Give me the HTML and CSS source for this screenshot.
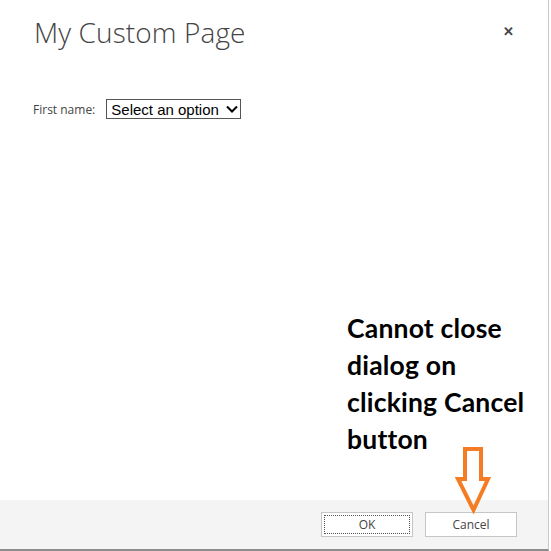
FILE: index.html
```html
<!DOCTYPE html>
<html>
<head>
<meta charset="utf-8">
<link rel="stylesheet" href="styles.css">
</head>
<body>
<div class="dialog">
  <div class="header">
    <h1 class="title">My Custom Page</h1>
    <span class="close">&#x2715;</span>
  </div>
  <div class="content">
    <div class="form-row">
      <label class="label">First name:</label>
      <div class="select">Select an option
        <svg class="chev" width="12" height="9" viewBox="0 0 12 9"><path d="M1 1.5 L6 6.5 L11 1.5" fill="none" stroke="#000" stroke-width="2"/></svg>
      </div>
    </div>
  </div>
  <div class="footer">
    <button class="btn btn-ok"><span class="focus">OK</span></button>
    <button class="btn">Cancel</button>
  </div>
  <div class="note">Cannot close<br>dialog on<br>clicking Cancel<br>button</div>
  <svg class="arrow" width="40" height="70" viewBox="0 0 40 70">
    <polygon points="14,2 30,2 30,32 37,32 22.5,63 7,32 14,32" fill="none" stroke="#f47d24" stroke-width="4" stroke-linejoin="miter"/>
  </svg>
</div>
</body>
</html>
```
FILE: styles.css
```css
html, body {
  margin: 0;
  padding: 0;
  background: #fff;
}
.dialog {
  position: relative;
  width: 548px;
  height: 549px;
  display: flex;
  flex-direction: column;
  border-right: 1px solid #c9c9c9;
  border-bottom: 2px solid #8c8c8c;
  font-family: "Open Sans", "Noto Sans", sans-serif;
}
.header {
  display: flex;
  justify-content: space-between;
  align-items: flex-start;
  padding: 12px 34px 0 34px;
}
.title {
  margin: 0;
  font-size: 28px;
  font-weight: 300;
  color: #444;
  line-height: 40px;
  letter-spacing: 0.1px;
}
.close {
  font-size: 13px;
  color: #444;
  font-weight: 700;
  margin-top: 10px;
}
.content {
  flex: 1;
  padding: 47px 0 0 33px;
}
.form-row {
  display: flex;
  align-items: center;
  gap: 11px;
}
.label {
  font-size: 12px;
  color: #444;
}
.select {
  display: flex;
  align-items: center;
  gap: 7px;
  border: 1px solid #555;
  height: 18px;
  padding: 0 2px 0 4px;
  font-family: "Liberation Sans", Arial, sans-serif;
  font-size: 15px;
  color: #000;
}
.chev {
  display: block;
}
.footer {
  height: 49px;
  background: #f4f4f4;
  display: flex;
  justify-content: flex-end;
  align-items: flex-start;
  gap: 12px;
  padding: 12px 31px 0 0;
  box-sizing: border-box;
}
.btn {
  width: 92px;
  height: 25px;
  background: #fff;
  border: 1px solid #c6c6c6;
  font-family: "Open Sans", "Noto Sans", sans-serif;
  font-size: 12px;
  color: #444;
  padding: 0;
  display: flex;
  align-items: center;
  justify-content: center;
}
.btn-ok {
  padding: 2px;
}
.focus {
  flex: 1;
  align-self: stretch;
  display: flex;
  align-items: center;
  justify-content: center;
  border: 1px dotted #555;
}
.note {
  position: absolute;
  left: 347px;
  top: 310px;
  font-family: "Lato", sans-serif;
  font-weight: 700;
  font-size: 26.5px;
  letter-spacing: 0.2px;
  line-height: 37px;
  color: #000;
}
.arrow {
  position: absolute;
  left: 451px;
  top: 447px;
}
```
